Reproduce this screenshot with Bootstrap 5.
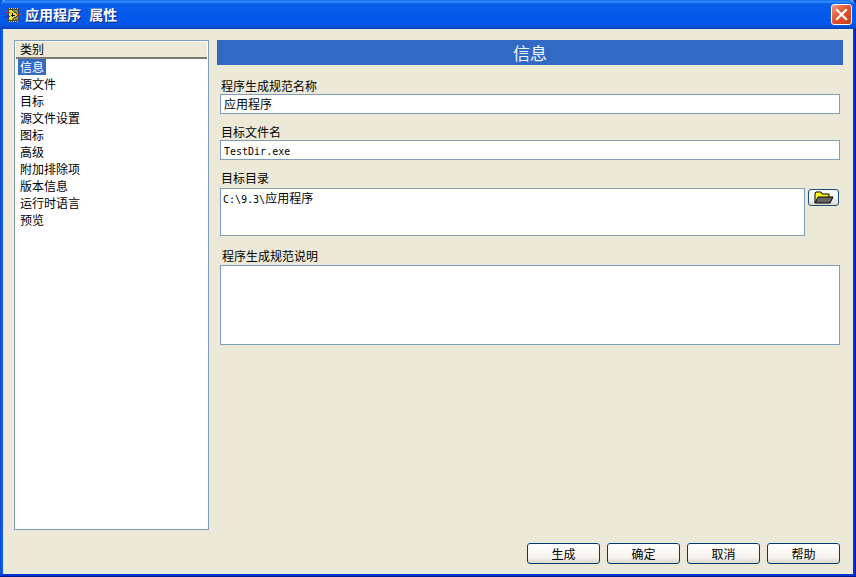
<!DOCTYPE html>
<html lang="zh">
<head>
<meta charset="utf-8">
<title>应用程序 属性</title>
<link href="https://cdn.jsdelivr.net/npm/bootstrap@5.3.0/dist/css/bootstrap.min.css" rel="stylesheet">
<style>
html,body{margin:0;height:577px;overflow:hidden;background:#ece9d8}
body{font-family:"Noto Sans CJK SC","Liberation Sans",sans-serif;font-size:12px;line-height:17px;color:#000}
.xp-window{width:856px;height:577px;background:#ece9d8;padding:0 3px 3px 3px;box-shadow:inset 0 -1px #001a8c,inset -1px 0 #00239c,inset 0 -3px #0436d4,inset -3px 0 #0436d4,inset 1px 0 #0a50d8,inset 3px 0 #0a5cf0}
.xp-title{height:29px;margin:0 -3px;padding:0 4px 0 5px;background:linear-gradient(180deg,#0a5ce0 0,#3a93ff 4%,#0a5fe8 14%,#0558ea 50%,#0359ee 78%,#0a50d8 92%,#0540b8 100%);border-radius:6px 6px 0 0;color:#fff;font-weight:700;font-size:14px;text-shadow:1px 1px 0 #0a2a80}
.xp-title-text{word-spacing:5px}
.xp-close{width:21px;height:21px;padding:0;border:1px solid #fff;border-radius:3px;background:linear-gradient(135deg,#ef9b7e,#e0552f 45%,#c63d14)}
.xp-client{padding:11px 13px 10px 11px}
.cat-panel{width:195px;height:490px;background:#fff;border:1px solid #7f9db9;padding:1px}
.cat-head{height:17px;line-height:14px;background:#ece9d8;border-bottom:2px solid #7d7b70;padding-left:4px}
.cat-item{height:17px;line-height:15px;padding-left:4px}
.cat-sel{display:block;width:fit-content;height:16px;line-height:15px;padding:0 2px;margin-left:-2px;background:#316ac5;color:#fff}
.main-pane{width:626px;margin-left:8px}
.page-banner{height:25px;line-height:25px;background:#316ac5;color:#f4f4f4;font-size:17px;text-align:center}
.fields{padding:13px 3px 0 3px}
.fld-label{height:16px;line-height:16px;padding-left:1px}
.fld-gap{margin-top:10px}
.fld-box{background:#fff;border:1px solid #7f9db9;padding:0 3px;color:#000}
.fld-line{height:20px;line-height:18px}
.fld-mono{font-family:"DejaVu Sans Mono","Liberation Mono",monospace;font-size:10px}
.mono-line{line-height:21px}
.dir-row{margin-top:2px}
.dir-box{width:585px;height:48px;padding:1px 2px 0;line-height:16px}
.desc-label{margin-top:12px;padding-left:2px}
.desc-box{height:80px;margin-top:1px}
.folder-btn{width:31px;height:17px;padding:0;margin:1px 0 0 3px;border:1px solid #1c4f7f;border-radius:3px;background:linear-gradient(180deg,#fff,#f1f0e8 70%,#dcd8c8)}
.foot-btns{gap:7px}
.xp-btn{width:73px;height:21px;padding:0;font-size:12px;line-height:18px;color:#000;border:1px solid #003c74;border-radius:3px;background:linear-gradient(180deg,#fff,#f4f3ee 70%,#dcd8c8)}
</style>
</head>
<body>
<div class="xp-window d-flex flex-column">
  <div class="xp-title d-flex align-items-center flex-shrink-0">
    <svg width="16" height="14" viewBox="0 0 16 14" class="flex-shrink-0 me-1" aria-hidden="true" shape-rendering="crispEdges">
      <rect x="3" y="0" width="11" height="14" fill="#444"/>
      <path d="M4 .5h1M6 .5h1M8 .5h1M10 .5h1M12 .5h1M4 13.500h1M6 13.500h1M8 13.500h1M10 13.500h1M12 13.500h1" stroke="#ccc"/>
      <rect x="4" y="2" width="9" height="10" fill="#8a8a60"/>
      <path d="M4 2h3l6 5-6 5H4z" fill="#e8e020"/>
      <path d="M7 5h1v1.500h1.500v1H8V9H7V7.500H5.500v-1H7z" fill="#111"/>
      <path d="M7 2l6 5-6 5" fill="none" stroke="#222" stroke-width=".8"/>
      <rect x="0" y="4" width="5" height="1" fill="#f02020"/>
      <rect x="0" y="8" width="5" height="1" fill="#2030e0"/>
      <rect x="12" y="6" width="4" height="1" fill="#f02020"/>
    </svg>
    <span class="xp-title-text flex-grow-1">应用程序 属性</span>
    <button class="xp-close d-flex align-items-center justify-content-center" type="button" aria-label="关闭">
      <svg width="13" height="13" viewBox="0 0 13 13" aria-hidden="true"><path d="M2 2l9 9M11 2l-9 9" stroke="#fff" stroke-width="2.200" stroke-linecap="square"/></svg>
    </button>
  </div>
  <div class="xp-client d-flex flex-column flex-grow-1">
    <div class="d-flex">
      <div class="cat-panel flex-shrink-0">
        <div class="cat-head">类别</div>
        <div class="cat-item"><span class="cat-sel">信息</span></div>
        <div class="cat-item">源文件</div>
        <div class="cat-item">目标</div>
        <div class="cat-item">源文件设置</div>
        <div class="cat-item">图标</div>
        <div class="cat-item">高级</div>
        <div class="cat-item">附加排除项</div>
        <div class="cat-item">版本信息</div>
        <div class="cat-item">运行时语言</div>
        <div class="cat-item">预览</div>
      </div>
      <div class="main-pane flex-shrink-0">
        <div class="page-banner">信息</div>
        <div class="fields">
          <div class="fld-label">程序生成规范名称</div>
          <div class="fld-box fld-line">应用程序</div>
          <div class="fld-label fld-gap">目标文件名</div>
          <div class="fld-box fld-line fld-mono mono-line">TestDir.exe</div>
          <div class="fld-label fld-gap">目标目录</div>
          <div class="d-flex dir-row">
            <div class="fld-box dir-box flex-shrink-0"><span class="fld-mono">C:\9.3\</span>应用程序</div>
            <button class="folder-btn d-flex align-items-center justify-content-center" type="button" aria-label="浏览">
              <svg width="20" height="13" viewBox="0 0 20 13" aria-hidden="true">
                <path d="M1 12V2l1-1h5l1 2h7v3" fill="#ffff20" stroke="#000"/>
                <path d="M1 12l3-6h15l-3 6z" fill="#666" stroke="#000"/>
              </svg>
            </button>
          </div>
          <div class="fld-label desc-label">程序生成规范说明</div>
          <div class="fld-box desc-box"></div>
        </div>
      </div>
    </div>
    <div class="foot-btns d-flex justify-content-end mt-auto">
      <button class="xp-btn" type="button">生成</button>
      <button class="xp-btn" type="button">确定</button>
      <button class="xp-btn" type="button">取消</button>
      <button class="xp-btn" type="button">帮助</button>
    </div>
  </div>
</div>
<script src="https://cdn.jsdelivr.net/npm/bootstrap@5.3.0/dist/js/bootstrap.bundle.min.js"></script>
</body>
</html>
